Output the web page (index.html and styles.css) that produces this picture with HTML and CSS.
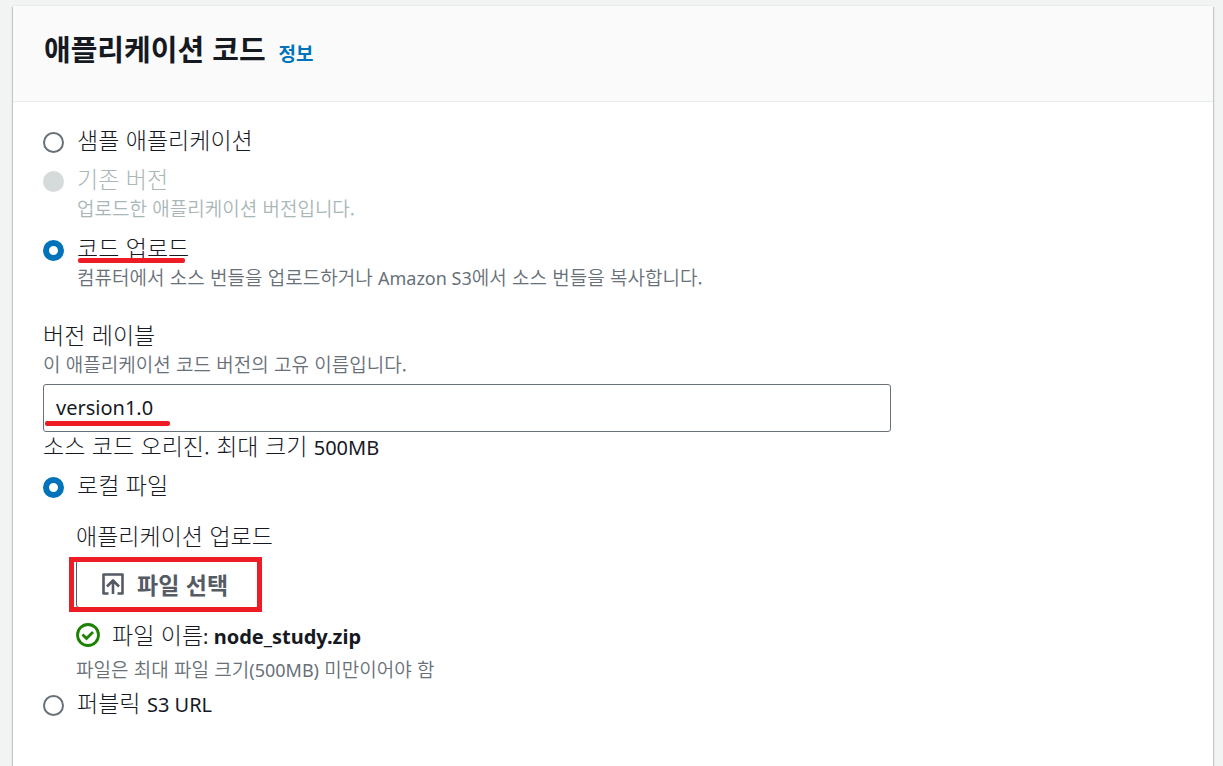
FILE: index.html
```html
<!DOCTYPE html>
<html lang="ko">
<head>
<meta charset="utf-8">
<title>애플리케이션 코드</title>
<link rel="stylesheet" href="styles.css">
</head>
<body>
<main class="card">
  <header class="card-header">
    <h2 class="title">애플리케이션 코드</h2>
    <a class="info" href="#">정보</a>
  </header>
  <form class="card-body">
    <div class="option">
      <input class="radio" type="radio" name="source" id="sample">
      <label class="label" for="sample">샘플 애플리케이션</label>
    </div>
    <div class="option option-described disabled">
      <input class="radio" type="radio" name="source" id="existing" disabled>
      <label for="existing">
        <span class="label">기존 버전</span>
        <span class="hint">업로드한 애플리케이션 버전입니다.</span>
      </label>
    </div>
    <div class="option option-described">
      <input class="radio" type="radio" name="source" id="upload" checked>
      <label for="upload">
        <span class="label"><span class="marked">코드 업로드</span></span>
        <span class="hint">컴퓨터에서 소스 번들을 업로드하거나 <span class="latin">Amazon S3</span>에서 소스 번들을 복사합니다.</span>
      </label>
    </div>
    <div class="field">
      <label class="label" for="version">버전 레이블</label>
      <span class="hint" id="version-hint">이 애플리케이션 코드 버전의 고유 이름입니다.</span>
      <div class="input-wrap">
        <input class="text-input" type="text" id="version" value="version1.0" aria-describedby="version-hint">
      </div>
    </div>
    <div class="label origin">소스 코드 오리진. 최대 크기 <span class="latin">500MB</span></div>
    <div class="option">
      <input class="radio" type="radio" name="origin" id="local" checked>
      <label class="label" for="local">로컬 파일</label>
    </div>
    <div class="upload">
      <span class="label">애플리케이션 업로드</span>
      <div class="button-wrap">
        <button class="file-button" type="button">
          <svg class="upload-icon" viewBox="0 0 22 22" aria-hidden="true"><path d="M6.500 20.500H1.500V1.500H20.500V20.500H15.500M11 21V8M5 13.500L11 7.500L17 13.500"/></svg>
          파일 선택
        </button>
      </div>
      <div class="status">
        <svg class="check-icon" viewBox="0 0 24 24" aria-hidden="true"><circle cx="12" cy="12" r="10.500"/><path d="M6.500 11.500L10.500 15.500L17 9"/></svg>
        <span class="label">파일 이름<span class="latin">: <b>node_study.zip</b></span></span>
      </div>
      <span class="hint">파일은 최대 파일 크기<span class="latin">(500MB)</span> 미만이어야 함</span>
    </div>
    <div class="option">
      <input class="radio" type="radio" name="origin" id="public">
      <label class="label" for="public">퍼블릭 <span class="latin">S3 URL</span></label>
    </div>
  </form>
</main>
</body>
</html>
```
FILE: styles.css
```css
* { box-sizing: border-box; }

body {
  margin: 0;
  padding: 6px 10px 0 13px;
  min-height: 100vh;
  display: flex;
  flex-direction: column;
  background: #f2f3f3;
  color: #16191f;
  font-family: "Noto Sans CJK KR", "Noto Sans", sans-serif;
}

.card {
  flex: 1;
  background: #fff;
  box-shadow: 0 -1px 0 #eaeded, 1px 1px 1px rgba(0, 28, 36, 0.2), -1px 1px 1px rgba(0, 28, 36, 0.2);
}

.card-header {
  display: flex;
  align-items: baseline;
  gap: 13px;
  padding: 22px 31px 33px;
  background: #fafafa;
  border-bottom: 1px solid #eaeded;
}

.title {
  margin: 0;
  font-size: 29px;
  line-height: 40px;
  font-weight: 700;
}

.info {
  color: #0073bb;
  font-size: 19px;
  line-height: 30px;
  font-weight: 700;
  text-decoration: none;
}

.card-body { padding: 21px 30px; }

.label {
  display: block;
  font-size: 23px;
  font-weight: 300;
  line-height: 33px;
}

.hint {
  display: block;
  margin-top: 1px;
  color: #687078;
  font-size: 19px;
  font-weight: 350;
  line-height: 24px;
}

.latin {
  font-family: "Noto Sans", sans-serif;
  font-weight: 400;
  font-size: 20px;
  line-height: 1;
}

.latin b { font-weight: 700; }

.hint .latin { font-size: 18px; }

.option {
  display: flex;
  align-items: flex-start;
  gap: 13px;
  margin-bottom: 6px;
}

.option-described { margin-bottom: 11px; }

.radio {
  appearance: none;
  flex: none;
  width: 21px;
  height: 21px;
  margin: 9px 0 0;
  border: 2px solid #687078;
  border-radius: 50%;
  background: #fff;
}

.radio:checked { border: 6px solid #0073bb; }

.radio:disabled {
  border-color: #d5dbdb;
  background: #d5dbdb;
}

.disabled .label, .disabled .hint { color: #aab7b8; }

.marked {
  position: relative;
  display: inline-block;
}

.marked::after, .input-wrap::after {
  content: "";
  position: absolute;
  height: 5px;
  border-radius: 2px;
  background: #ee1c25;
}

.marked::after {
  left: 1px;
  right: 4px;
  bottom: 1px;
}

.field { padding-top: 18px; }

.input-wrap {
  position: relative;
  max-width: 848px;
  margin-top: 8px;
}

.input-wrap::after {
  left: 2px;
  bottom: 6px;
  width: 125px;
}

.text-input {
  display: block;
  width: 100%;
  height: 48px;
  padding: 0 12px 2px;
  border: 1px solid #687078;
  border-radius: 3px;
  background: #fff;
  color: #16191f;
  font-family: "Noto Sans", sans-serif;
  font-size: 20px;
}

.origin {
  margin-bottom: 9px;
  line-height: 27px;
}

.upload {
  padding: 12px 0 5px 33px;
}

.button-wrap {
  position: relative;
  width: max-content;
  margin: 8px 0 10px;
}

.button-wrap::after {
  content: "";
  position: absolute;
  inset: -3px -3px -4px -7px;
  border: 5px solid #ee1c25;
  pointer-events: none;
}

.file-button {
  display: flex;
  align-items: center;
  gap: 13px;
  height: 48px;
  padding: 0 30px 0 25px;
  border: 1px solid #545b64;
  border-radius: 3px;
  background: #fff;
  color: #545b64;
  font-family: inherit;
  font-size: 23px;
  font-weight: 700;
}

.upload-icon {
  width: 22px;
  height: 22px;
  fill: none;
  stroke: #545b64;
  stroke-width: 2.6;
  stroke-linejoin: round;
}

.status {
  display: flex;
  align-items: center;
  gap: 12px;
  margin-bottom: 6px;
}

.check-icon {
  width: 24px;
  height: 24px;
  fill: none;
  stroke: #1d8102;
  stroke-width: 2.8;
}
```
